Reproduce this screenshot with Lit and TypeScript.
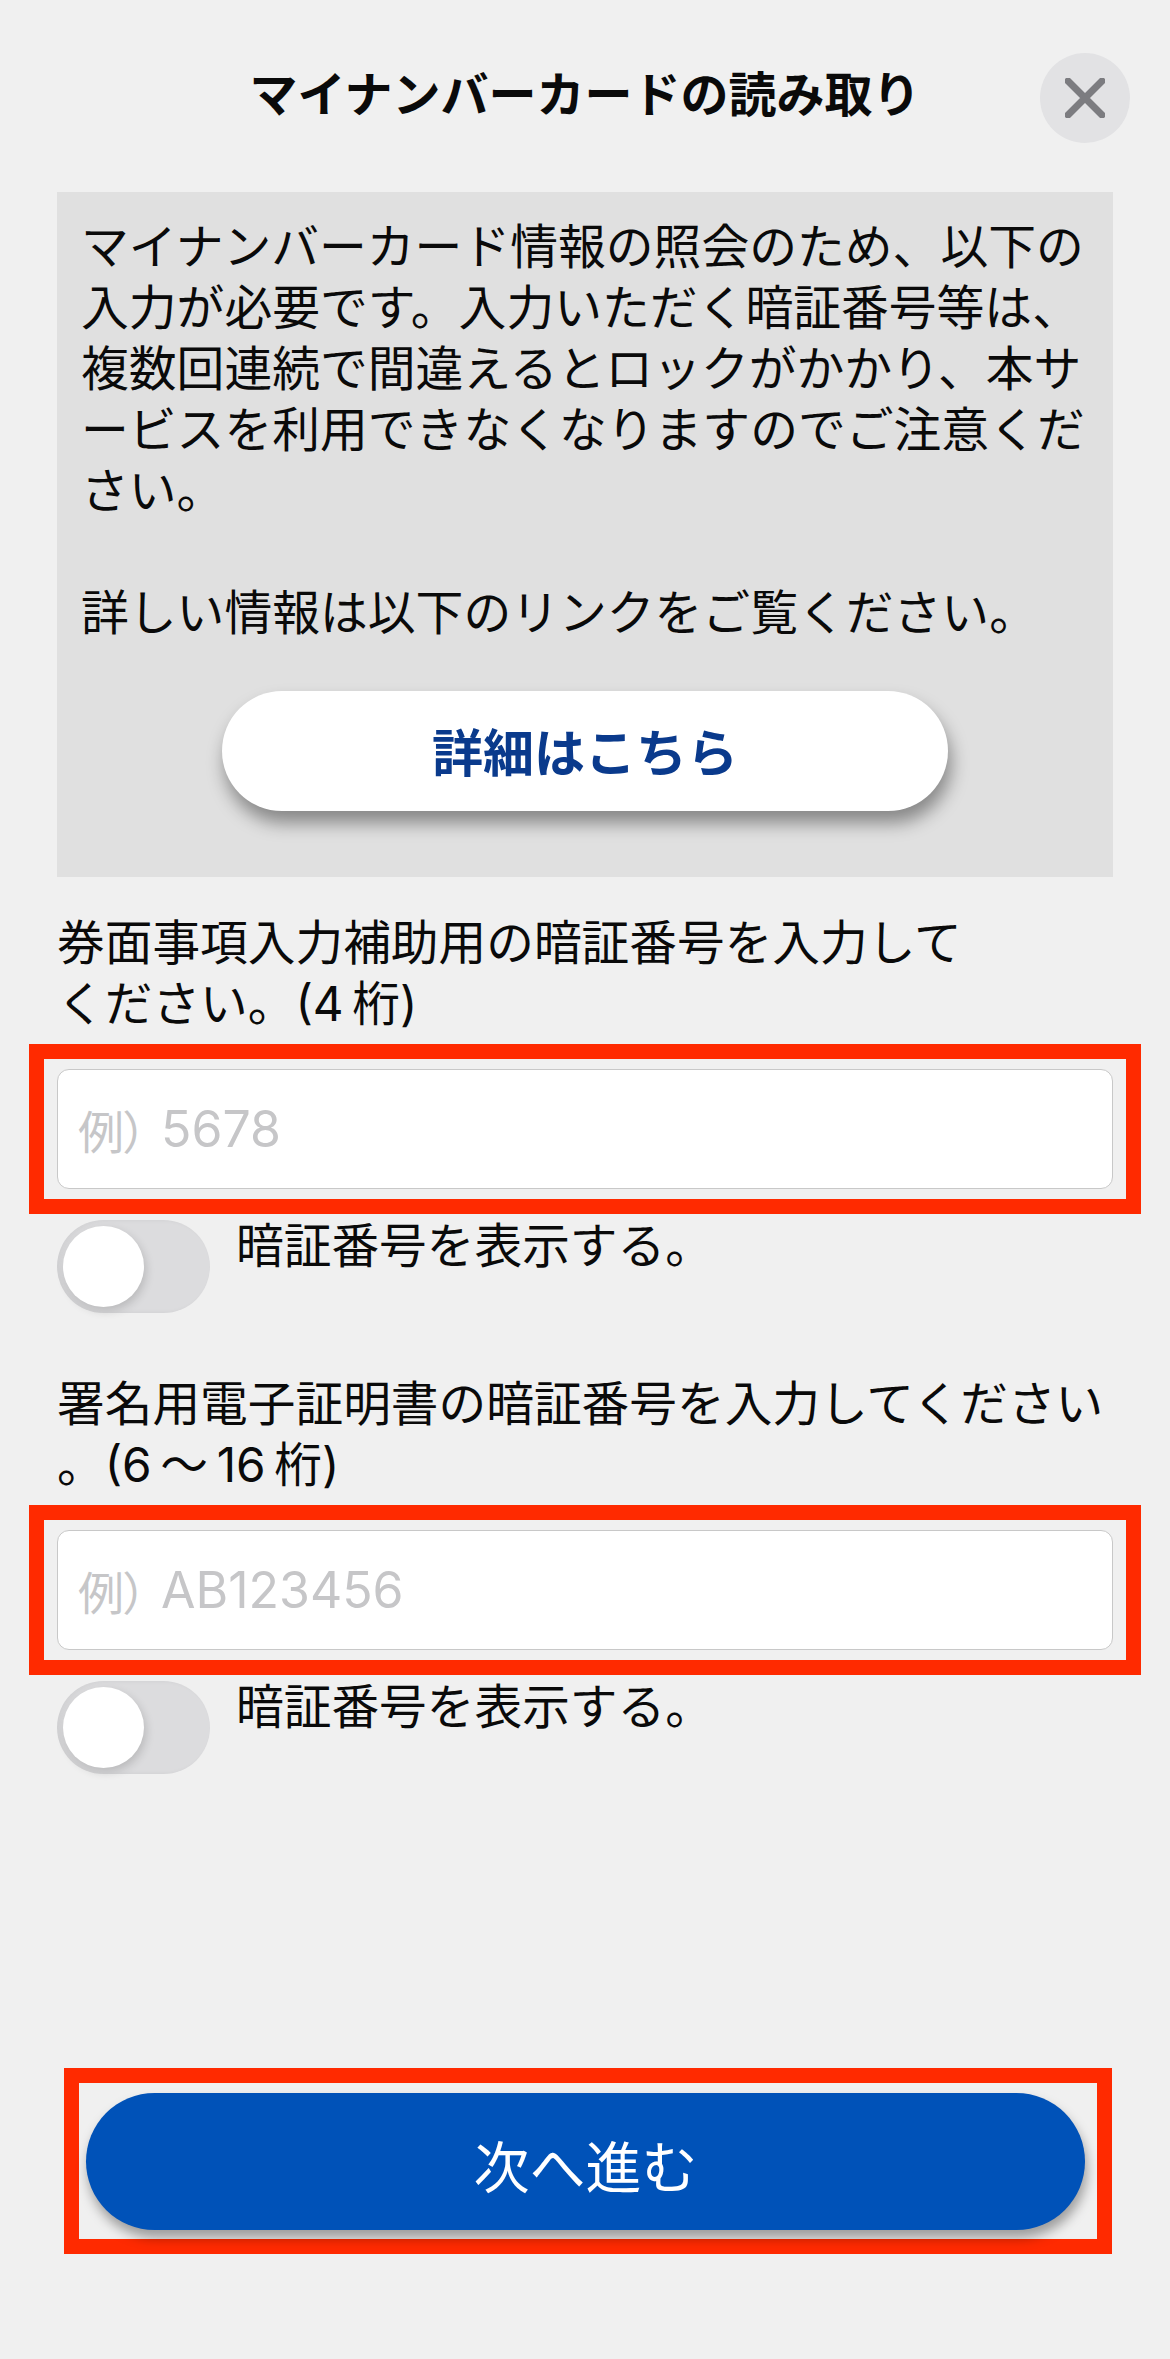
import { LitElement, html, css } from 'lit';
import { customElement } from 'lit/decorators.js';

@customElement('pin-field')
export class PinField extends LitElement {
  static properties = {
    label: { type: String },
    hint: { type: String },
    example: { type: String },
  };

  declare label: string;
  declare hint: string;
  declare example: string;

  static styles = css`
    :host {
      display: block;
      font-family: Inter, 'Noto Sans CJK JP', sans-serif;
    }

    .label {
      margin: 0;
      font-size: 47.7px;
      line-height: 61px;
      color: #0a0a0a;
      white-space: nowrap;
    }

    .highlight {
      margin: 9px -28px 0;
      padding: 10px 13px;
      border: 15px solid #ff2a00;
    }

    .input {
      box-sizing: border-box;
      display: flex;
      align-items: center;
      height: 120px;
      padding: 0 20px;
      background: #fff;
      border: 1px solid #c8c8c8;
      border-radius: 12px;
      color: #c6c6c8;
    }

    /* proportional metrics close up the wide fullwidth bracket */
    .mark {
      margin-right: 14px;
      font-size: 46px;
      font-feature-settings: 'palt';
    }

    .sample {
      font-size: 50px;
    }

    .toggle-row {
      display: flex;
      align-items: flex-start;
      gap: 26px;
      margin-top: 6px;
    }

    .toggle {
      box-sizing: border-box;
      flex: none;
      width: 153px;
      height: 93px;
      padding: 6px;
      background: #dcdcde;
      border-radius: 47px;
      box-shadow: inset 3px 0 5px rgba(0, 0, 0, 0.06);
    }

    .knob {
      width: 81px;
      height: 81px;
      background: #fff;
      border-radius: 50%;
      box-shadow: 2px 4px 10px rgba(0, 0, 0, 0.16);
    }

    .toggle-text {
      margin-top: -4px;
      font-size: 47.7px;
      line-height: 61px;
      color: #0a0a0a;
    }
  `;

  render() {
    return html`
      <p class="label">${this.label}<br />${this.hint}</p>
      <div class="highlight">
        <div class="input">
          <span class="mark">例）</span><span class="sample">${this.example}</span>
        </div>
      </div>
      <div class="toggle-row">
        <div class="toggle"><div class="knob"></div></div>
        <div class="toggle-text">暗証番号を表示する。</div>
      </div>
    `;
  }
}

@customElement('app-root')
export class AppRoot extends LitElement {
  static styles = css`
    :host {
      display: block;
      box-sizing: border-box;
      min-height: 2359px;
      padding: 0 57px;
      background: #f0f0f0;
      font-family: Inter, 'Noto Sans CJK JP', sans-serif;
      color: #0a0a0a;
    }

    .header {
      position: relative;
      display: flex;
      justify-content: center;
      align-items: center;
      height: 192px;
    }

    .title {
      margin: 0;
      padding-bottom: 2px;
      font-size: 48px;
      font-weight: 700;
      line-height: 1;
    }

    .close {
      position: absolute;
      top: 53px;
      right: -17px;
      display: flex;
      align-items: center;
      justify-content: center;
      width: 90px;
      height: 90px;
      background: #e2e2e4;
      border-radius: 50%;
    }

    .notice {
      box-sizing: border-box;
      height: 685px;
      padding: 25px 20px 0 24px;
      background: #e0e0e0;
    }

    .notice p {
      margin: 0;
      font-size: 47.8px;
      line-height: 61px;
      word-break: break-all;
    }

    .detail {
      display: flex;
      align-items: center;
      justify-content: center;
      box-sizing: border-box;
      width: 726px;
      height: 120px;
      margin: 47px 0 0 141px;
      padding-bottom: 3px;
      background: #fff;
      border-radius: 60px;
      box-shadow: 3px 12px 18px rgba(0, 0, 0, 0.4);
      font-size: 51px;
      font-weight: 700;
      color: #0a3a8c;
    }

    .fields {
      display: flex;
      flex-direction: column;
      gap: 61px;
      margin-top: 36px;
    }

    .next-frame {
      position: absolute;
      box-sizing: border-box;
      left: 64px;
      top: 2068px;
      width: 1048px;
      height: 186px;
      padding: 10px 12px 9px 7px;
      border: 15px solid #ff2a00;
    }

    .next {
      display: flex;
      align-items: center;
      justify-content: center;
      box-sizing: border-box;
      height: 100%;
      padding-top: 3px;
      background: #0052b8;
      border-radius: 70px;
      box-shadow: 2px 8px 12px rgba(0, 0, 0, 0.35);
      font-size: 56px;
      color: #fff;
    }
  `;

  render() {
    return html`
      <header class="header">
        <h1 class="title">マイナンバーカードの読み取り</h1>
        <div class="close">
          <svg width="40" height="40" viewBox="0 0 40 40" aria-hidden="true">
            <path
              d="M3 3 L37 37 M37 3 L3 37"
              stroke="#7c7c80"
              stroke-width="7"
              stroke-linecap="round"
              fill="none"
            />
          </svg>
        </div>
      </header>

      <section class="notice">
        <p>
          マイナンバーカード情報の照会のため、以下の入力が必要です。入力いただく暗証番号等は、複数回連続で間違えるとロックがかかり、本サービスを利用できなくなりますのでご注意ください。<br /><br />詳しい情報は以下のリンクをご覧ください。
        </p>
        <div class="detail">詳細はこちら</div>
      </section>

      <div class="fields">
        <pin-field
          label="券面事項入力補助用の暗証番号を入力して"
          hint="ください。(4&#8201;桁)"
          example="5678"
        ></pin-field>
        <pin-field
          label="署名用電子証明書の暗証番号を入力してください"
          hint="。(6&#8201;～&#8201;16&#8201;桁)"
          example="AB123456"
        ></pin-field>
      </div>

      <div class="next-frame">
        <div class="next">次へ進む</div>
      </div>
    `;
  }
}
